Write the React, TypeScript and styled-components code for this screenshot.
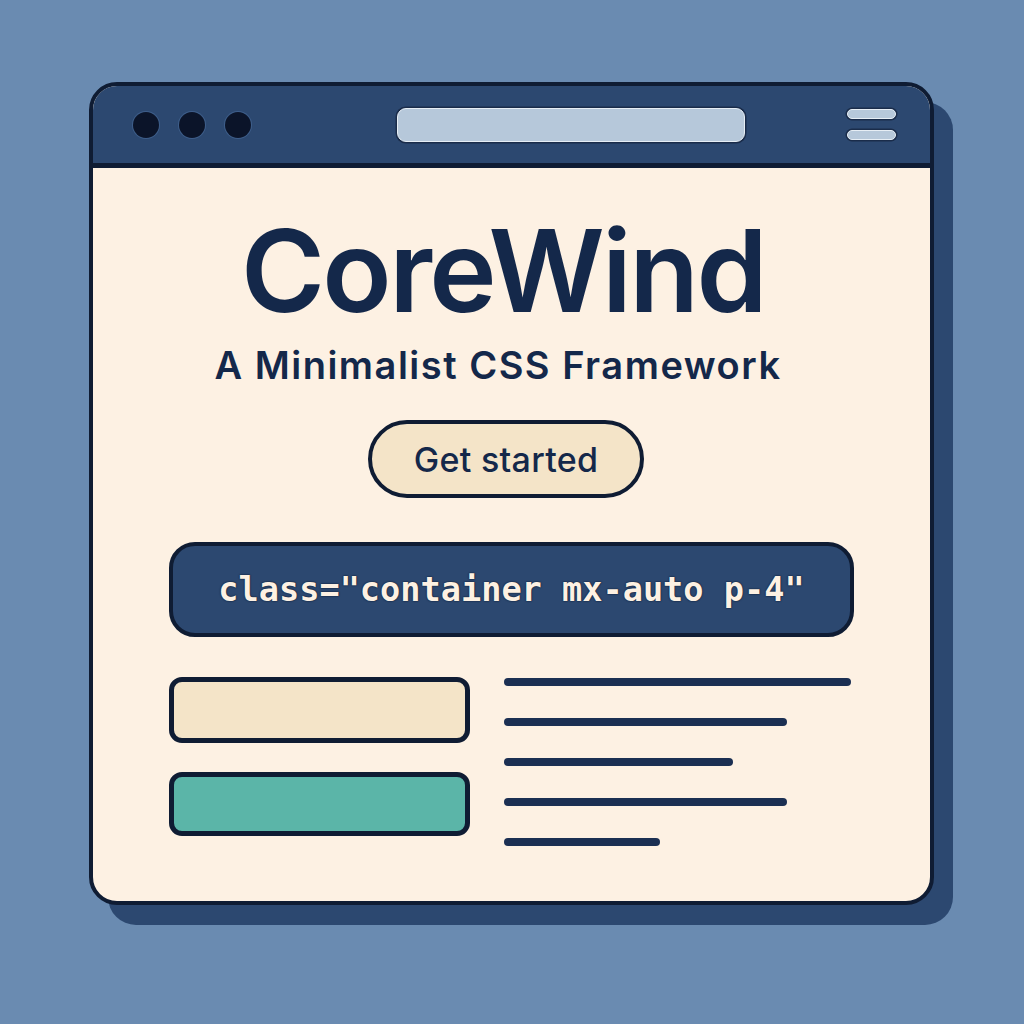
import React from "react";
import styled, { createGlobalStyle } from "styled-components";

const Global = createGlobalStyle`
  html, body { margin: 0; padding: 0; background: #6a8bb1; }
  body { font-family: Inter, "Noto Sans", sans-serif; }
`;

const Page = styled.div`
  width: 1024px;
  height: 1024px;
  box-sizing: border-box;
  padding: 82px 0 0 89px;
  background: #6a8bb1;
`;

const Window = styled.div`
  width: 845px;
  height: 823px;
  box-sizing: border-box;
  border: 4px solid #0f1c33;
  border-radius: 28px;
  background: #fdf1e3;
  box-shadow: 19px 20px 0 0 #2c4870;
  display: flex;
  flex-direction: column;
  overflow: hidden;
`;

const TitleBar = styled.div`
  height: 77px;
  flex: none;
  background: #2c4870;
  border-bottom: 5px solid #0f1c33;
  display: flex;
  align-items: center;
  padding: 0 34px 0 40px;
`;

const Dots = styled.div`
  display: flex;
  gap: 20px;
`;

const Dot = styled.span`
  width: 26px;
  height: 26px;
  border-radius: 50%;
  background: #0b1429;
  box-shadow: 0 0 0 1px #3e5e8a;
`;

const Address = styled.div`
  width: 346px;
  height: 32px;
  margin-left: 146px;
  border-radius: 9px;
  background: #b6c8da;
  border: 1px solid #e6eef5;
  box-shadow: 0 0 0 1.5px #1a2c4a;
`;

const Menu = styled.div`
  margin-left: auto;
  display: flex;
  flex-direction: column;
  gap: 11px;
`;

const MenuBar = styled.span`
  width: 47px;
  height: 8px;
  border-radius: 5px;
  background: #b6c8da;
  border: 1px solid #e6eef5;
  box-shadow: 0 0 0 1.5px #1a2c4a;
`;

const Content = styled.div`
  flex: 1;
  display: flex;
  flex-direction: column;
  align-items: center;
  padding: 46px 76px 0 76px;
`;

const Title = styled.h1`
  margin: 0 17px 0 0;
  font-family: Inter, sans-serif;
  font-weight: 600;
  font-size: 114px;
  line-height: 1;
  letter-spacing: -2.6px;
  color: #14284a;
`;

const Subtitle = styled.h2`
  margin: 18px 27px 0 0;
  font-family: Inter, sans-serif;
  font-weight: 600;
  font-size: 38px;
  line-height: 1;
  letter-spacing: 1.5px;
  color: #14284a;
`;

const Button = styled.button`
  margin: 36px 11px 0 0;
  width: 276px;
  height: 78px;
  box-sizing: border-box;
  border: 4px solid #0f1c33;
  border-radius: 40px;
  background: #f4e4c8;
  font-family: Inter, sans-serif;
  font-weight: 500;
  font-size: 34px;
  letter-spacing: 0.3px;
  color: #14284a;
  display: flex;
  align-items: center;
  justify-content: center;
  padding: 0;
`;

const Code = styled.div`
  margin-top: 44px;
  width: 685px;
  height: 95px;
  box-sizing: border-box;
  border: 4px solid #0f1c33;
  border-radius: 26px;
  background: #2c4870;
  display: flex;
  align-items: center;
  justify-content: center;
  font-family: "DejaVu Sans Mono", "Liberation Mono", monospace;
  font-weight: 700;
  font-size: 33.6px;
  color: #fdf1e3;
  text-shadow: 0 0 2px #0f1c33, 0 0 1px #0f1c33;
`;

const Lower = styled.div`
  margin-top: 40px;
  width: 685px;
  display: grid;
  grid-template-columns: 301px 1fr;
  column-gap: 34px;
`;

const Boxes = styled.div`
  display: flex;
  flex-direction: column;
  gap: 29px;
`;

const Block = styled.div<{ $bg: string; $h: number }>`
  height: ${(p) => p.$h}px;
  box-sizing: border-box;
  border: 5px solid #0f1c33;
  border-radius: 13px;
  background: ${(p) => p.$bg};
`;

const Lines = styled.div`
  display: flex;
  flex-direction: column;
  gap: 32px;
  padding-top: 1px;
`;

const Line = styled.span<{ $w: number }>`
  display: block;
  width: ${(p) => p.$w}px;
  height: 8px;
  border-radius: 4px;
  background: #1b2f52;
`;

export default function App() {
  return (
    <Page>
      <Global />
      <Window>
        <TitleBar>
          <Dots>
            <Dot />
            <Dot />
            <Dot />
          </Dots>
          <Address />
          <Menu>
            <MenuBar />
            <MenuBar />
          </Menu>
        </TitleBar>
        <Content>
          <Title>CoreWind</Title>
          <Subtitle>A Minimalist CSS Framework</Subtitle>
          <Button>Get started</Button>
          <Code>class="container mx-auto p-4"</Code>
          <Lower>
            <Boxes>
              <Block $bg="#f4e4c8" $h={66} />
              <Block $bg="#5bb5a8" $h={64} />
            </Boxes>
            <Lines>
              <Line $w={347} />
              <Line $w={283} />
              <Line $w={229} />
              <Line $w={283} />
              <Line $w={156} />
            </Lines>
          </Lower>
        </Content>
      </Window>
    </Page>
  );
}
